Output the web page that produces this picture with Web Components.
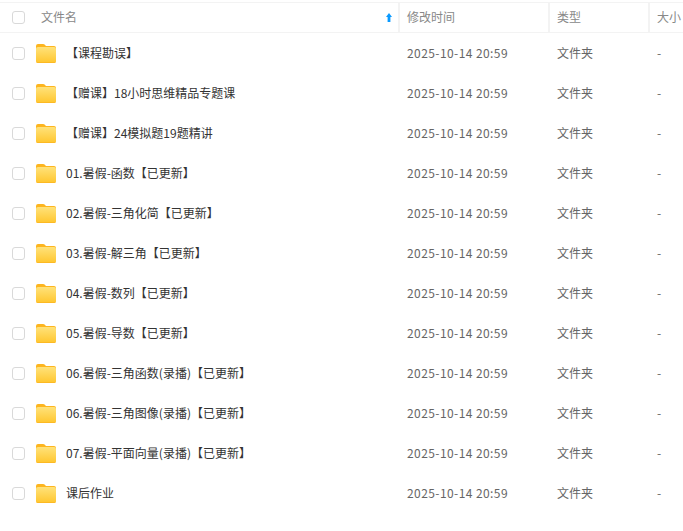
<!DOCTYPE html>
<html lang="zh">
<head>
<meta charset="utf-8">
<title>文件列表</title>
<style>
  html, body { margin: 0; background: #fff; overflow: hidden; }
  body { font-family: "Noto Sans CJK SC", sans-serif; }
</style>
</head>
<body>
<file-table></file-table>
<script>
const COLUMNS = '398px 150px 100px 1fr';

const FILES = [
  '【课程勘误】',
  '【赠课】18小时思维精品专题课',
  '【赠课】24模拟题19题精讲',
  '01.暑假-函数【已更新】',
  '02.暑假-三角化简【已更新】',
  '03.暑假-解三角【已更新】',
  '04.暑假-数列【已更新】',
  '05.暑假-导数【已更新】',
  '06.暑假-三角函数(录播)【已更新】',
  '06.暑假-三角图像(录播)【已更新】',
  '07.暑假-平面向量(录播)【已更新】',
  '课后作业'
];

class FileCheck extends HTMLElement {
  constructor() {
    super();
    this.attachShadow({ mode: 'open' });
    this.shadowRoot.innerHTML = `
      <style>
        :host {
          display: block;
          box-sizing: border-box;
          width: 13px;
          height: 13px;
          border: 1px solid #d9d9d9;
          border-radius: 3px;
          background: #fff;
        }
      </style>
    `;
  }
}

class FolderIcon extends HTMLElement {
  constructor() {
    super();
    this.attachShadow({ mode: 'open' });
    this.shadowRoot.innerHTML = `
      <style>
        :host { display: block; width: 20px; height: 19px; }
        svg { display: block; }
      </style>
      <svg width="20" height="19" viewBox="0 0 20 19">
        <defs>
          <linearGradient id="body" x1="0" y1="0" x2="0" y2="1">
            <stop offset="0" stop-color="#ffe27a"/>
            <stop offset="1" stop-color="#ffc62e"/>
          </linearGradient>
        </defs>
        <path d="M0 2a2 2 0 0 1 2-2h5.2a2 2 0 0 1 1.4.6L10 2h8a2 2 0 0 1 2 2v3H0z" fill="#fdb51f"/>
        <path d="M0 5a2 2 0 0 1 2-2h16a2 2 0 0 1 2 2v12a2 2 0 0 1-2 2H2a2 2 0 0 1-2-2z" fill="url(#body)"/>
        <path d="M0 17v-.8a2 2 0 0 0 2 2h16a2 2 0 0 0 2-2v.8a2 2 0 0 1-2 2H2a2 2 0 0 1-2-2z" fill="#fdb51f"/>
      </svg>
    `;
  }
}

class FileHeader extends HTMLElement {
  constructor() {
    super();
    this.attachShadow({ mode: 'open' });
    this.shadowRoot.innerHTML = `
      <style>
        :host {
          display: grid;
          grid-template-columns: ${COLUMNS};
          height: 29px;
          border-top: 1px solid #f3f3f3;
          border-bottom: 1px solid #f3f3f3;
          font-size: 12px;
          color: #888;
        }
        .cell {
          display: flex;
          align-items: center;
          padding-left: 7px;
          border-left: 2px solid #f3f3f3;
          white-space: nowrap;
          overflow: hidden;
          box-sizing: border-box;
        }
        .cell span { padding-bottom: 2px; }
        .name {
          border-left: 0;
          padding: 0 0 0 12px;
        }
        .name span { margin-left: 16px; flex: 1; }
        .name svg { margin-right: 6px; }
      </style>
      <div class="cell name">
        <file-check></file-check>
        <span>文件名</span>
        <svg width="6" height="9" viewBox="0 0 6 9"><path d="M3 0 6 4H4.4V9H1.6V4H0z" fill="#0a9aff"/></svg>
      </div>
      <div class="cell"><span>修改时间</span></div>
      <div class="cell"><span>类型</span></div>
      <div class="cell"><span>大小</span></div>
    `;
  }
}

class FileRow extends HTMLElement {
  constructor() {
    super();
    this.attachShadow({ mode: 'open' });
    this.shadowRoot.innerHTML = `
      <style>
        :host {
          display: grid;
          grid-template-columns: ${COLUMNS};
          height: 40px;
          font-size: 12px;
          color: #666;
        }
        .cell {
          display: flex;
          align-items: center;
          padding-left: 9px;
          white-space: nowrap;
          overflow: hidden;
        }
        .cell span { padding-bottom: 2px; }
        .name { padding-left: 12px; color: #333; }
        folder-icon { margin: 0 10px 0 11px; }
        .date { letter-spacing: 0.42px; }
      </style>
      <div class="cell name">
        <file-check></file-check>
        <folder-icon></folder-icon>
        <span><slot></slot></span>
      </div>
      <div class="cell date"><span>2025-10-14 20:59</span></div>
      <div class="cell"><span>文件夹</span></div>
      <div class="cell"><span>-</span></div>
    `;
  }
}

class FileTable extends HTMLElement {
  constructor() {
    super();
    this.attachShadow({ mode: 'open' });
    this.shadowRoot.innerHTML = `
      <style>
        :host { display: block; padding-top: 2px; height: 529px; overflow: hidden; }
      </style>
      <file-header></file-header>
      <div id="rows"></div>
    `;
  }

  connectedCallback() {
    const rows = this.shadowRoot.querySelector('#rows');
    FILES.forEach(name => {
      const row = document.createElement('file-row');
      row.textContent = name;
      rows.appendChild(row);
    });
  }
}

customElements.define('file-check', FileCheck);
customElements.define('folder-icon', FolderIcon);
customElements.define('file-header', FileHeader);
customElements.define('file-row', FileRow);
customElements.define('file-table', FileTable);
</script>
</body>
</html>
